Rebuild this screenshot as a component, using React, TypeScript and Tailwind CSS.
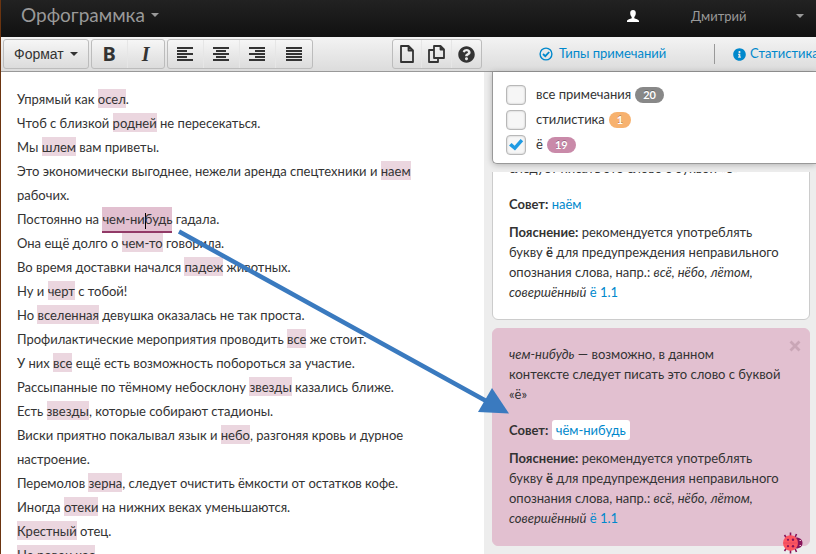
import { useState } from 'react';
import type { ReactNode } from 'react';
import { FaInfoCircle, FaQuestionCircle } from 'react-icons/fa';

type Align = 'left' | 'center' | 'right' | 'justify';

const alignLabels: Record<Align, string> = {
  left: 'По левому краю',
  center: 'По центру',
  right: 'По правому краю',
  justify: 'По ширине',
};

const Caret = ({ className = '' }: { className?: string }) => (
  <svg viewBox="0 0 8 4" className={`w-2 h-1 shrink-0 ${className}`} fill="currentColor" aria-hidden="true">
    <path d="M0 0h8L4 4z" />
  </svg>
);

const AlignIcon = ({ align }: { align: Align }) => {
  const shortWidth = align === 'justify' ? 16 : 10;
  const shortX = align === 'right' ? 6 : align === 'center' ? 3 : 0;
  return (
    <svg viewBox="0 0 16 14" className="w-4 h-[14px]" fill="currentColor" shapeRendering="crispEdges" aria-hidden="true">
      {[0, 3, 6, 9, 12].map((y, i) => (
        <rect key={y} x={i % 2 ? shortX : 0} y={y} width={i % 2 ? shortWidth : 16} height="2" />
      ))}
    </svg>
  );
};

const FileIcon = () => (
  <svg viewBox="0 0 14 18" className="w-[14px] h-[18px]" fill="none" stroke="currentColor" strokeWidth="1.8" strokeLinejoin="round" aria-hidden="true">
    <path d="M1 1h7.5L13 5.5V17H1zM8.5 1v4.5H13" />
  </svg>
);

const CopyIcon = () => (
  <svg viewBox="0 0 17 18" className="w-[17px] h-[18px]" fill="none" stroke="currentColor" strokeWidth="1.8" strokeLinejoin="round" aria-hidden="true">
    <path d="M6 1h6.5L16 4.5V13H6zM12.5 1v3.500H16M6 5H1v12h9v-4" />
  </svg>
);

const UserIcon = () => (
  <svg viewBox="0 0 12 12" className="w-3 h-3" fill="currentColor" aria-hidden="true">
    <path d="M6 0C4.200 0 3.200 1.200 3.200 3c0 1.800.6 3 1.500 3.900v1.300C3.400 9 0 9.300 0 11v1h12v-1c0-1.700-3.400-2-4.700-2.800V6.900C8.200 6 8.800 4.800 8.800 3 8.800 1.200 7.800 0 6 0z" />
  </svg>
);

const CheckCircleIcon = () => (
  <svg viewBox="0 0 14 14" className="w-[14px] h-[14px] shrink-0" fill="none" stroke="currentColor" aria-hidden="true">
    <circle cx="7" cy="7" r="5.9" strokeWidth="1.4" />
    <path d="M4 7l2.300 2.200L10.200 5" strokeWidth="1.8" />
  </svg>
);

const LadybugIcon = () => (
  <svg viewBox="0 0 22 22" className="w-[22px] h-[22px]" aria-hidden="true">
    <path
      d="M4.500 6L2.500 3M8.500 4V.5M13 5.500l1.500-3.500M4.500 16l-2 3M8.500 18v3.500M13 16.500l1.500 3.500"
      stroke="#87145a"
      strokeWidth="1.6"
    />
    <path d="M14 5.500c4.500 0 6.500 2.500 6.500 5.500s-2 5.500-6.500 5.500z" fill="#87145a" />
    <path d="M17.500 8.500h1.500M17.500 13.500h1.500" stroke="#e3c1d0" />
    <ellipse cx="8.5" cy="11" rx="7.5" ry="7.8" fill="#fd5560" />
    <path d="M1.500 11H16" stroke="#e04660" strokeWidth="0.8" />
    <g fill="#87145a">
      <circle cx="6" cy="7.8" r="1.1" />
      <circle cx="11" cy="7.8" r="1.2" />
      <circle cx="6" cy="14.2" r="1.1" />
      <circle cx="11" cy="14.2" r="1.2" />
    </g>
  </svg>
);

const ButtonGroup = ({ children }: { children: ReactNode }) => (
  <div className="flex h-[30px] rounded-[3px] border border-[#bcbcbc] bg-linear-to-b from-[#f6f6f6] to-[#dcdcdc] divide-x divide-[#e6e6e6] text-[#333]">
    {children}
  </div>
);

const ToolButton = ({ label, className, children }: { label: string; className: string; children: ReactNode }) => (
  <button type="button" aria-label={label} title={label} className={`flex items-center justify-center ${className}`}>
    {children}
  </button>
);

const Mark = ({ children }: { children: ReactNode }) => (
  <mark className="bg-[#ebd6df] text-inherit pt-0.5 pb-px">{children}</mark>
);

const ActiveMark = () => (
  <mark className="bg-[#e2c0d0] text-inherit pt-1 pb-1 border-b-2 border-[#923a67]">
    чем-ни<span className="inline-block w-px h-4 -mr-px bg-black align-middle" />будь
  </mark>
);

const paragraphs: ReactNode[] = [
  <>Упрямый как <Mark>осел</Mark>.</>,
  <>Чтоб с близкой <Mark>родней</Mark> не пересекаться.</>,
  <>Мы <Mark>шлем</Mark> вам приветы.</>,
  <>Это экономически выгоднее, нежели аренда спецтехники и <Mark>наем</Mark> рабочих.</>,
  <>Постоянно на <ActiveMark /> гадала.</>,
  <>Она ещё долго о <Mark>чем-то</Mark> говорила.</>,
  <>Во время доставки начался <Mark>падеж</Mark> животных.</>,
  <>Ну и <Mark>черт</Mark> с тобой!</>,
  <>Но <Mark>вселенная</Mark> девушка оказалась не так проста.</>,
  <>Профилактические мероприятия проводить <Mark>все</Mark> же стоит.</>,
  <>У них <Mark>все</Mark> ещё есть возможность побороться за участие.</>,
  <>Рассыпанные по тёмному небосклону <Mark>звезды</Mark> казались ближе.</>,
  <>Есть <Mark>звезды</Mark>, которые собирают стадионы.</>,
  <>Виски приятно покалывал язык и <Mark>небо</Mark>, разгоняя кровь и дурное настроение.</>,
  <>Перемолов <Mark>зерна</Mark>, следует очистить ёмкости от остатков кофе.</>,
  <>Иногда <Mark>отеки</Mark> на нижних веках уменьшаются.</>,
  <><Mark>Крестный</Mark> отец.</>,
  <><Mark>Не ровен час</Mark>.</>,
];

const initialFilters = [
  { id: 'all', label: 'все примечания', count: 20, badge: 'bg-[#888]', checked: false },
  { id: 'style', label: 'стилистика', count: 1, badge: 'bg-[#f7b26f]', checked: false },
  { id: 'yo', label: 'ё', count: 19, badge: 'bg-[#c98aa9]', checked: true },
];

const Header = () => (
  <header className="flex items-start h-[37px] shrink-0 pl-5 pr-3 bg-linear-to-b from-[#222] to-[#111] text-[#999]">
    <button type="button" className="flex items-center gap-1.5 text-[19px] leading-[30px]">
      Орфограммка
      <Caret />
    </button>
    <div className="flex items-center ml-auto h-8">
      <span className="text-white"><UserIcon /></span>
      <button type="button" className="flex items-center justify-between w-[113px] ml-[52px] leading-5">
        Дмитрий
        <Caret />
      </button>
    </div>
  </header>
);

const Toolbar = () => (
  <div className="flex items-center h-[35px] shrink-0 pl-0.5 border-b border-[#999] bg-linear-to-b from-[#f3f3f3] to-[#dcdcdc]">
    <div className="flex grow items-center gap-0.5 pr-0.5">
      <ButtonGroup>
        <button type="button" className='flex items-center gap-1.5 px-2.5 text-sm font-["Liberation_Sans",sans-serif]'>
          Формат
          <Caret />
        </button>
      </ButtonGroup>
      <ButtonGroup>
        <ToolButton label="Полужирный" className="w-9">
          <span className='font-["Noto_Sans",sans-serif] text-xl leading-none font-bold'>B</span>
        </ToolButton>
        <ToolButton label="Курсив" className="w-9">
          <span className='font-["Liberation_Serif",serif] text-xl leading-none font-bold italic'>I</span>
        </ToolButton>
      </ButtonGroup>
      <ButtonGroup>
        {(['left', 'center', 'right', 'justify'] as Align[]).map((align) => (
          <ToolButton key={align} label={alignLabels[align]} className="w-9">
            <AlignIcon align={align} />
          </ToolButton>
        ))}
      </ButtonGroup>
      <div className="ml-auto">
        <ButtonGroup>
          <ToolButton label="Новый документ" className="w-[29px]"><FileIcon /></ToolButton>
          <ToolButton label="Копировать" className="w-[30px]"><CopyIcon /></ToolButton>
          <ToolButton label="Справка" className="w-[29px]"><FaQuestionCircle size={17} /></ToolButton>
        </ButtonGroup>
      </div>
    </div>
    <nav className="flex items-center w-[332px] shrink-0 pl-[55px] overflow-hidden whitespace-nowrap text-[#0088cc]">
      <a href="#types" className="flex items-center gap-1.5 w-[175px] shrink-0">
        <CheckCircleIcon />
        Типы примечаний
      </a>
      <a href="#stats" className="flex items-center gap-1 h-5 pl-[18px] shrink-0 border-l border-[#999]">
        <FaInfoCircle size={13} />
        Статистика
      </a>
    </nav>
  </div>
);

const Filters = () => {
  const [filters, setFilters] = useState(initialFilters);

  const toggle = (id: string) =>
    setFilters((prev) => prev.map((f) => (f.id === id ? { ...f, checked: !f.checked } : f)));

  return (
    <div className="relative z-10 shrink-0 pt-2.5 pb-1.5 pl-[13px] bg-white border-l border-b border-[#999] rounded-bl-[5px] shadow-[0_1px_6px_rgba(0,0,0,0.25)]">
      {filters.map((f) => (
        <label key={f.id} className="flex items-center h-[25px] text-[#333]">
          <span className="relative flex w-5 h-5 mr-2.5">
            <input
              type="checkbox"
              checked={f.checked}
              onChange={() => toggle(f.id)}
              className="appearance-none w-5 h-5 rounded border border-[#b8b8b8] bg-[#f6f6f6] shadow-[inset_0_0_2px_#bbb]"
            />
            {f.checked && (
              <svg viewBox="0 0 20 20" className="absolute inset-0 w-5 h-5 pointer-events-none" aria-hidden="true">
                <path d="M3 10.500l2.600-2.400 3 2.700 6-6.800 2.600 2.200L9 15.600z" fill="#1f9be3" />
              </svg>
            )}
          </span>
          {f.label}
          <span className={`ml-1 px-2 h-4 rounded-full text-[11px] leading-4 font-bold text-white [text-shadow:0_-1px_0_rgba(0,0,0,0.25)] ${f.badge}`}>
            {f.count}
          </span>
        </label>
      ))}
    </div>
  );
};

interface NoteProps {
  text: ReactNode;
  advice: string;
  active?: boolean;
}

const Note = ({ text, advice, active = false }: NoteProps) => (
  <article
    className={`relative shrink-0 pt-[15px] pb-[17px] pl-4 pr-6 border rounded-md ${
      active ? 'bg-[#e2c0d0] border-[#e2c0d0]' : 'bg-white border-[#ccc]'
    }`}
  >
    {active && (
      <button type="button" aria-label="Закрыть" className="absolute top-[11px] right-2 text-[#c9a6b6]">
        <svg viewBox="0 0 12 12" className="w-3 h-3" stroke="currentColor" strokeWidth="2.8" aria-hidden="true">
          <path d="M1.500 1.500l9 9M10.500 1.500l-9 9" />
        </svg>
      </button>
    )}
    <p>{text}</p>
    <p className="mt-4">
      <b>Совет:</b>{' '}
      <a href="#replace" className={active ? 'px-1 py-0.5 rounded-[3px] bg-white text-[#0088cc]' : 'text-[#0088cc]'}>
        {advice}
      </a>
    </p>
    <p className="mt-2">
      <b>Пояснение:</b> рекомендуется употреблять букву <b>ё</b> для предупреждения неправильного опознания слова,
      напр.: <i>всё, нёбо, лётом, совершённый</i>{' '}
      <a href="#rule" className="text-[#0088cc]">ё 1.1</a>
    </p>
  </article>
);

export default function App() {
  return (
    <div className='relative flex flex-col h-screen overflow-hidden border-l border-[#6b3410] bg-white font-["Lato",sans-serif] text-[13px] text-[#333]'>
      <Header />
      <Toolbar />
      <div className="flex grow min-h-0">
        <main className="grow min-w-0 pt-[15px] pl-4 pr-8 overflow-hidden leading-6">
          {paragraphs.map((p, i) => (
            <p key={i}>{p}</p>
          ))}
        </main>
        <aside className="flex flex-col w-[332px] shrink-0 pl-2 bg-[#ededed]">
          <Filters />
          <div className="flex flex-col justify-end gap-2 grow min-h-0 mt-2 pb-2 pr-1.5 overflow-hidden leading-5">
            <Note
              text={<><i>наем</i> — возможно, в данном контексте следует писать это слово с буквой «ё»</>}
              advice="наём"
            />
            <Note
              text={<><i>чем-нибудь</i> — возможно, в данном<br />контексте следует писать это слово с буквой «ё»</>}
              advice="чём-нибудь"
              active
            />
          </div>
        </aside>
      </div>

      {/* pointer from the selected word to its note */}
      <svg viewBox="0 0 334 188" className="absolute left-[175px] top-[228px] w-[334px] h-[188px] pointer-events-none" aria-hidden="true">
        <path d="M3 3.500L312 174" stroke="#3a7abf" strokeWidth="4.5" />
        <path d="M333 185.500L316 160l-14 24z" fill="#3a7abf" />
      </svg>

      <button type="button" aria-label="Сообщить об ошибке" className="absolute right-3 bottom-0">
        <LadybugIcon />
      </button>
    </div>
  );
}
